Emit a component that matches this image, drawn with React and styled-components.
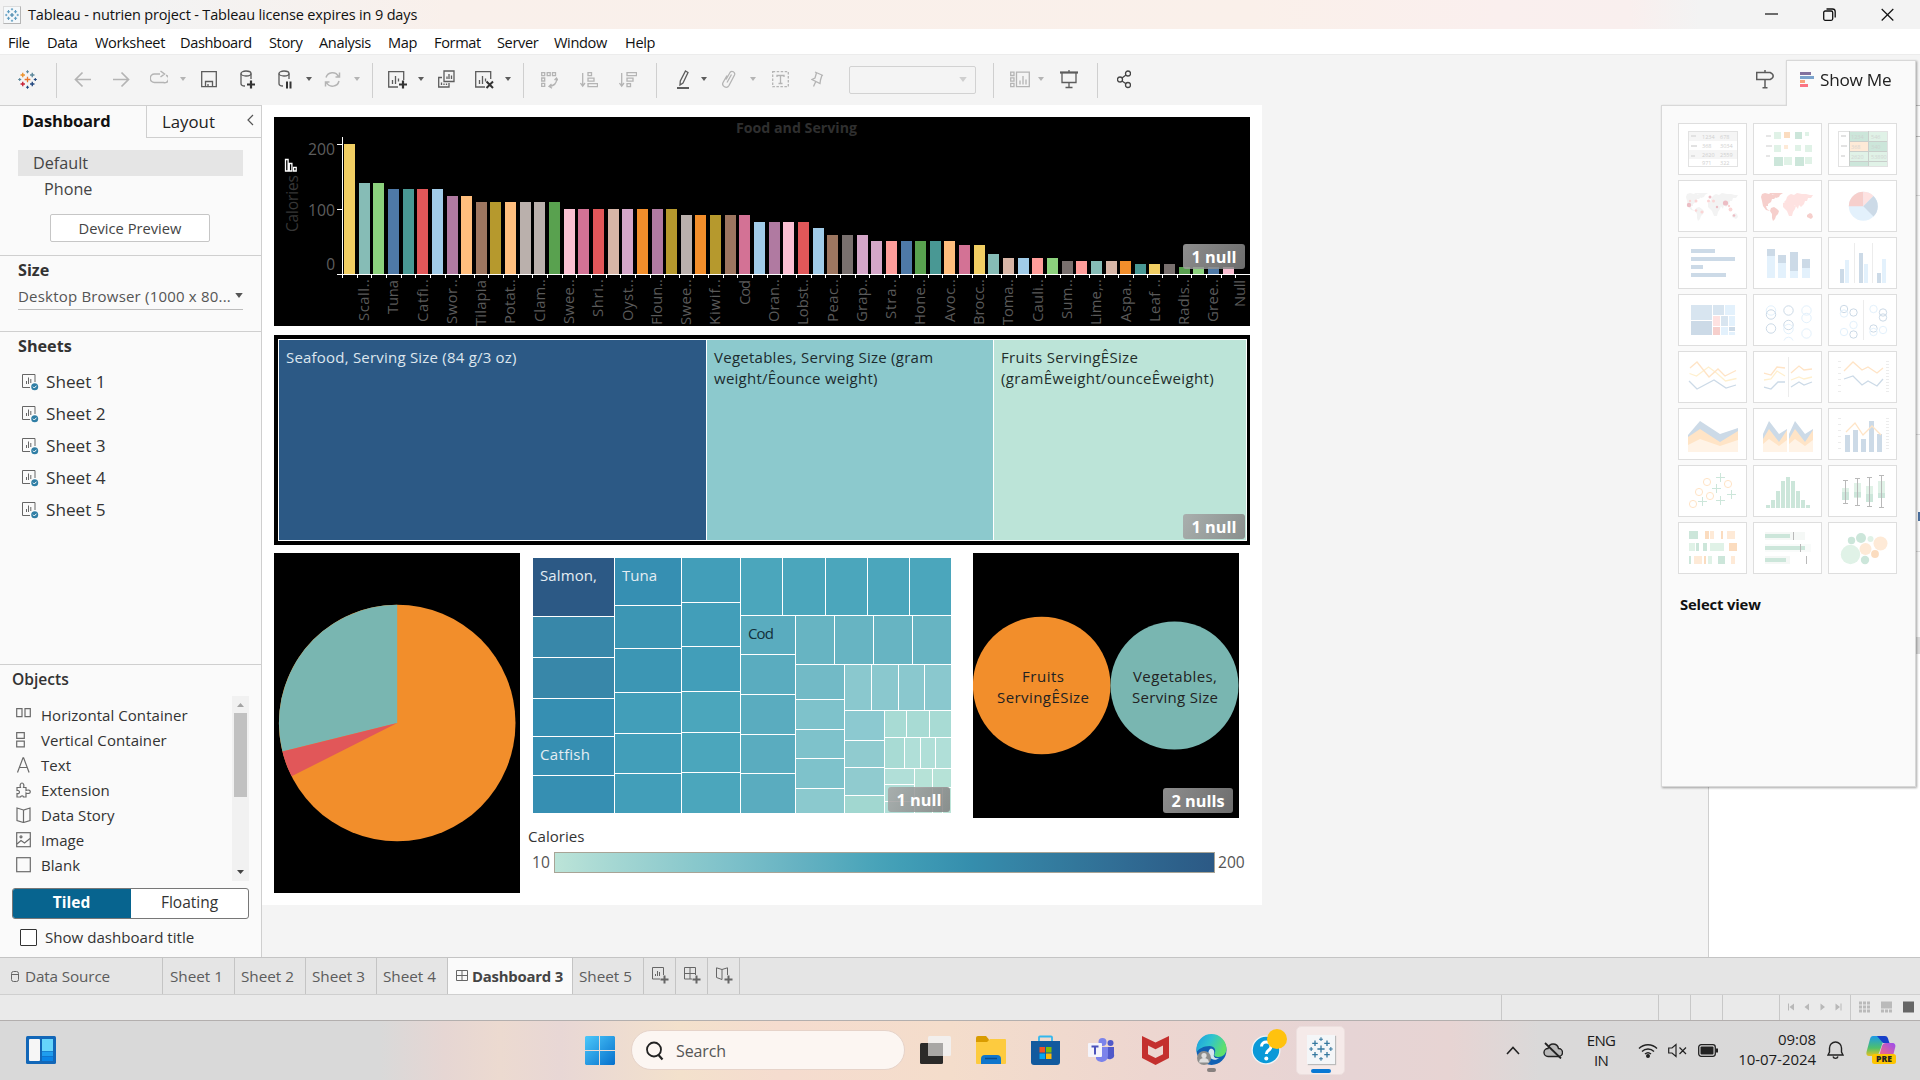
import React from "react";
import styled, { createGlobalStyle, css } from "styled-components";

const UI = `"Open Sans", "Noto Sans", sans-serif`;

const GlobalStyle = createGlobalStyle`
  *, *::before, *::after { box-sizing: border-box; }
  body { margin: 0; overflow: hidden; font-family: ${UI}; color: #333; }
  svg { display: block; flex: none; }
  svg text { font-family: ${UI}; }
`;

const Screen = styled.div`
  width: 1920px;
  height: 1080px;
  display: flex;
  flex-direction: column;
  background: #f4f4f4;
  white-space: nowrap;
`;

/* ---------- title and menu ---------- */

const TitleBar = styled.header`
  height: 29px;
  display: flex;
  align-items: center;
  padding-left: 3px;
  background: linear-gradient(90deg, #f3f3f3 0, #f3f3f3 150px, #f9f0eb 450px, #faf0ea 1250px, #faefee 1500px, #f9efee 1630px, #f3f3f3 1700px);
`;
const AppBadge = styled.span`
  width: 18px;
  height: 18px;
  display: flex;
  align-items: center;
  justify-content: center;
  background: #f5f8fa;
  border: 1px solid #dcdcdc;
  border-right-color: #b5b5b5;
  border-bottom-color: #b5b5b5;
`;
const WindowTitle = styled.span`
  flex: 1;
  margin-left: 7px;
  font-size: 14.5px;
  letter-spacing: -0.16px;
  color: #111;
`;
const WindowButtons = styled.div`
  display: flex;
  align-items: center;
  gap: 45px;
  padding: 0 26px 1px 0;
`;
const MenuBar = styled.nav`
  height: 25px;
  display: flex;
  align-items: center;
  gap: 16px;
  padding: 1px 0 0 8px;
  background: #fff;
`;
const MenuItem = styled.span`
  width: ${(p) => p.$w}px;
  font-size: 14.6px;
  line-height: 20px;
  letter-spacing: -0.38px;
  color: #111;
`;

/* ---------- toolbar ---------- */

const ToolBar = styled.div`
  height: 51px;
  display: flex;
  align-items: center;
  padding-bottom: 2px;
  border-top: 1px solid #ececec;
`;
const Tool = styled.span`
  margin-left: ${(p) => p.$gap}px;
  color: ${(p) => (p.$off ? "#b4b4b4" : "#5c5c5c")};
`;
const Divider = styled.span`
  width: 1px;
  height: 35px;
  margin: 2px 0 0 ${(p) => p.$gap}px;
  background: #cfcfcf;
`;
const FitSelect = styled.span`
  width: 127px;
  height: 28px;
  margin: 1px 0 0 25px;
  padding-right: 8px;
  display: flex;
  align-items: center;
  justify-content: flex-end;
  border: 1px solid #d2d2d2;
  border-radius: 2px;
  color: #cfcfcf;
`;

/* ---------- body ---------- */

const Body = styled.div`
  height: 852px;
  display: flex;
`;
const SidePanel = styled.aside`
  width: 262px;
  display: flex;
  flex-direction: column;
  background: #fafafa;
  border-top: 1px solid #cfcfcf;
  border-right: 1px solid #cfcfcf;
`;
const PanelTabs = styled.div`
  height: 32px;
  display: flex;
`;
const ActiveTab = styled.span`
  width: 146px;
  padding-left: 22px;
  line-height: 29px;
  font-size: 16.5px;
  font-weight: 700;
  letter-spacing: -0.15px;
  color: #111;
`;
const OtherTab = styled.span`
  flex: 1;
  display: flex;
  align-items: center;
  justify-content: space-between;
  padding: 0 7px 1px 15px;
  font-size: 16.8px;
  border-left: 1px solid #cfcfcf;
  border-bottom: 1px solid #cfcfcf;
  color: #222;
`;
const Collapse = styled.span`
  padding-bottom: 3px;
`;
const DeviceBlock = styled.div`
  height: 118px;
  padding: 12px 18px 0;
  display: flex;
  flex-direction: column;
  font-size: 16.2px;
  color: #444;
  border-bottom: 1px solid #cfcfcf;
`;
const DeviceRow = styled.span`
  height: 26px;
  line-height: 26px;
  padding-left: ${(p) => p.$indent}px;
  background: ${(p) => (p.$on ? "#e5e5e5" : "none")};
`;
const PreviewButton = styled.span`
  width: 160px;
  height: 28px;
  margin: 12px 0 0 32px;
  line-height: 27px;
  text-align: center;
  font-size: 14.7px;
  background: #fff;
  border: 1px solid #c6c6c6;
  border-radius: 2px;
`;
const SizeBlock = styled.div`
  height: 76px;
  padding: 2px 18px 0;
  border-bottom: 1px solid #cfcfcf;
`;
const Heading = styled.div`
  line-height: 24px;
  font-size: 16.2px;
  font-weight: 700;
  color: #333;
`;
const SizeSelect = styled.div`
  height: 28px;
  display: flex;
  align-items: center;
  justify-content: space-between;
  font-size: 15px;
  letter-spacing: 0.2px;
  color: #555;
  border-bottom: 1px solid #bdbdbd;
`;
const SheetsBlock = styled.div`
  flex: 1;
  padding: 2px 18px 0;
`;
const SheetRow = styled.div`
  height: 32px;
  display: flex;
  align-items: center;
  gap: 7px;
  padding-left: 4px;
  font-size: 17.2px;
  color: #333;
`;
const SheetMark = styled.span`
  padding-top: 2px;
`;
const SheetList = styled.div`
  margin-top: 7px;
`;
const ObjectsBlock = styled.div`
  height: 293px;
  padding: 3px 12px 0;
  border-top: 1px solid #cfcfcf;
`;
const ObjectsHeading = styled.div`
  height: 28px;
  line-height: 23px;
  font-size: 15.6px;
  font-weight: 600;
`;
const ObjectsScroll = styled.div`
  height: 185px;
  display: flex;
  justify-content: space-between;
`;
const ObjectsList = styled.div`
  padding-top: 6px;
`;
const ObjectRow = styled.div`
  height: 25px;
  display: flex;
  align-items: center;
  gap: 9px;
  padding-left: 4px;
  font-size: 15px;
  letter-spacing: 0.06px;
  color: #333;
`;
const ScrollTrack = styled.div`
  width: 17px;
  display: flex;
  flex-direction: column;
  align-items: center;
  justify-content: space-between;
  padding: 7px 0;
  background: #f1f1f1;
`;
const ScrollThumb = styled.div`
  width: 13px;
  height: 84px;
  margin: 6px 0 auto;
  background: #c1c1c1;
`;
const Segmented = styled.div`
  width: 237px;
  height: 31px;
  margin-top: 7px;
  display: flex;
  border: 1px solid #777;
  border-radius: 3px;
  overflow: hidden;
  background: #fff;
`;
const Segment = styled.span`
  flex: 1;
  line-height: 27px;
  text-align: center;
  font-size: 15.5px;
  ${(p) =>
    p.$on &&
    css`
      flex: 0 0 119px;
      margin: -1px 0 -1px -1px;
      line-height: 29px;
      color: #fff;
      font-weight: 700;
      background: #07648f;
    `}
`;
const CheckRow = styled.div`
  display: flex;
  align-items: center;
  gap: 8px;
  margin: 8px 0 0 8px;
  font-size: 15.1px;
  line-height: 20px;
`;
const CheckBox = styled.span`
  width: 17px;
  height: 17px;
  margin-top: 1px;
  border: 1px solid #333;
  border-radius: 1px;
  background: #fff;
`;

/* ---------- dashboard ---------- */

const Workspace = styled.main`
  flex: 1;
  display: flex;
  justify-content: space-between;
`;
const Dashboard = styled.section`
  width: 1000px;
  height: 800px;
  padding: 12px;
  display: flex;
  flex-direction: column;
  background: #fff;
`;
const Sheet = styled.div`
  position: relative;
  flex: none;
  width: ${(p) => p.$w}px;
  height: ${(p) => p.$h}px;
  background: ${(p) => (p.$plain ? "#fff" : "#000")};
  margin: ${(p) => p.$m || 0};
`;
const NullBadge = styled.span`
  position: absolute;
  right: ${(p) => p.$r}px;
  bottom: ${(p) => p.$b}px;
  width: ${(p) => p.$w || 62}px;
  height: 25px;
  line-height: 26px;
  text-align: center;
  font-size: 16.3px;
  font-weight: 700;
  color: #fff;
  border-radius: 3px;
  background: linear-gradient(120deg, rgba(166, 166, 166, 0.85), rgba(128, 128, 128, 0.85));
`;
const Blocks = styled.div`
  height: 202px;
  display: grid;
  grid-template-columns: 427px 286px 1fr;
  gap: 1px;
  padding: 1px;
  background: #fff;
`;
const BlocksSheet = styled(Sheet)`
  padding: 4px 3px 4px 4px;
`;
const Block = styled.div`
  padding: 7px 7px;
  font-size: 15px;
  line-height: 21px;
  letter-spacing: ${(p) => p.$ls}px;
  color: ${(p) => p.$c};
  background: ${(p) => p.$bg};
`;
const LowerRow = styled.div`
  display: flex;
`;
const LowerRight = styled.div`
  flex: 1;
  display: flex;
  flex-direction: column;
`;
const ChartPair = styled.div`
  display: flex;
`;
const Legend = styled.div`
  margin-top: 7px;
  padding-left: 8px;
  color: #333;
  font-size: 15.1px;
`;
const LegendTitle = styled.div`
  height: 22px;
  line-height: 22px;
`;
const LegendScale = styled.div`
  height: 21px;
  display: flex;
  align-items: center;
  margin: 5px 0 0 4px;
  font-size: 15.6px;
  line-height: 20px;
  color: #555;
`;
const Ramp = styled.span`
  width: 661px;
  height: 21px;
  margin: 0 3px 0 4px;
  border: 1px solid #a8a496;
  background: linear-gradient(90deg, ${(p) => p.$stops});
`;
const LegendValue = styled.span`
  width: ${(p) => p.$w}px;
  padding-bottom: 1px;
`;
const RightPane = styled.div`
  width: 212px;
  display: flex;
  flex-direction: column;
  align-items: flex-end;
  background: #fff;
  border-left: 1px solid #cfcfcf;
`;
const EdgePiece = styled.span`
  width: ${(p) => p.$w || 4}px;
  height: ${(p) => p.$h}px;
  background: ${(p) => p.$c || "#fafafa"};
`;

/* ---------- show me ---------- */

const ShowMe = styled.section`
  position: absolute;
  left: 1661px;
  top: 60px;
  width: 255px;
  height: 727px;
  display: flex;
  flex-direction: column;
  filter: drop-shadow(1px 1px 1px rgba(0, 0, 0, 0.35));
`;
const ShowMeTab = styled.div`
  width: 130px;
  height: 46px;
  margin: 0 0 -1px auto;
  z-index: 1;
  display: flex;
  align-items: center;
  gap: 6px;
  padding: 0 0 8px 13px;
  font-size: 17.2px;
  letter-spacing: -0.25px;
  color: #222;
  background: #fafafa;
  border: 1px solid #d8d8d8;
  border-bottom: 0;
`;
const ShowMeBody = styled.div`
  flex: 1;
  padding: 17px 16px;
  background: #fafafa;
  border: 1px solid #d8d8d8;
`;
const CardGrid = styled.div`
  display: grid;
  grid-template-columns: repeat(3, 69px);
  grid-auto-rows: 52px;
  gap: 5px 6px;
`;
const Card = styled.span`
  background: #fff;
  box-shadow: inset 0 0 0 1px #dedede;
`;
const SelectView = styled.div`
  margin: 18px 0 0 2px;
  line-height: 24px;
  font-size: 14.8px;
  font-weight: 700;
  letter-spacing: -0.15px;
  color: #111;
`;

/* ---------- tab strip and status ---------- */

const SheetTabs = styled.div`
  height: 37px;
  display: flex;
  background: #e5e5e5;
  border-top: 1px solid #c4c4c4;
`;
const SheetTab = styled.span`
  width: ${(p) => p.$w}px;
  display: flex;
  align-items: center;
  gap: 6px;
  padding: ${(p) => p.$pad || "0 0 0 6px"};
  font-size: 15.3px;
  letter-spacing: ${(p) => p.$ls || -0.02}px;
  color: #5c5c5c;
  border-right: 1px solid #c4c4c4;
  ${(p) =>
    p.$on &&
    css`
      font-weight: 700;
      font-size: 14.9px;
      color: #444;
      background: #fafafa;
      gap: 4px;
      letter-spacing: -0.22px;
    `}
`;
const StatusBar = styled.div`
  height: 27px;
  display: flex;
  justify-content: flex-end;
  background: #eaeaea;
  border-top: 1px solid #cfcfcf;
  border-bottom: 1px solid #b3afae;
`;
const StatusCell = styled.span`
  width: ${(p) => p.$w}px;
  display: flex;
  align-items: center;
  padding-bottom: 2px;
  border-left: 1px solid #c8c8c8;
`;

/* ---------- taskbar ---------- */

const TaskBar = styled.footer`
  height: 59px;
  display: flex;
  align-items: center;
  padding-bottom: 1px;
  background: linear-gradient(90deg, #d9d9d9 0, #d9d9d9 380px, #e6d6d3 445px, #ecdad0 500px, #e8d7d5 560px, #f3e1cc 680px, #f5dccf 780px, #f4ddcb 950px, #edd6d0 1150px, #e6d4d5 1350px, #e7d4d3 1450px, #dad9d9 1540px, #d9d9d9);
`;
const SearchBox = styled.span`
  width: 274px;
  height: 40px;
  margin: 0 0 0 16px;
  display: flex;
  align-items: center;
  gap: 12px;
  padding: 1px 0 0 13px;
  border-radius: 20px;
  font-size: 16px;
  letter-spacing: -0.1px;
  color: #555;
  background: #fcf6f2;
  border: 1px solid #e6d3c9;
`;
const TaskIcon = styled.span`
  margin-left: ${(p) => p.$gap}px;
`;
const ActiveTask = styled.span`
  width: 49px;
  height: 49px;
  margin-left: 9px;
  display: flex;
  flex-direction: column;
  align-items: center;
  justify-content: flex-end;
  gap: 5px;
  padding-bottom: 1px;
  border-radius: 5px;
  background: #f5eae9;
  border: 1px solid #ecdfde;
`;
const TaskTile = styled.span`
  width: 28px;
  height: 29px;
  display: flex;
  align-items: center;
  justify-content: center;
  background: #f4f6f8;
  box-shadow: 1px 1px 1px #bbb;
`;
const TaskUnderline = styled.span`
  width: 20px;
  height: 4px;
  border-radius: 2px;
  background: #0a78d4;
`;
const TrayText = styled.span`
  margin-left: ${(p) => p.$gap}px;
  padding-bottom: ${(p) => p.$lift || 0}px;
  width: ${(p) => p.$w}px;
  text-align: ${(p) => p.$align};
  font-size: 15px;
  line-height: 20px;
  letter-spacing: ${(p) => p.$ls}px;
  color: #1c1c1c;
`;

/* ---------- icons ---------- */

const Plus = ({ x, y, r, c, w = 1 }) => (
  <path d={`M${x - r} ${y}h${2 * r}M${x} ${y - r}v${2 * r}`} stroke={c} strokeWidth={w} fill="none" />
);
const TableauMark = ({ size, colors, w = 1.3 }) => {
  const [a, b, c, d, e] = colors;
  return (
    <svg width={size} height={size} viewBox="0 0 20 20">
      <Plus x={10} y={10} r={3} c={a} w={w} />
      <Plus x={5} y={5.3} r={2.3} c={b} w={w} />
      <Plus x={15} y={5.3} r={2.3} c={c} w={w} />
      <Plus x={5} y={14.7} r={2.3} c={d} w={w} />
      <Plus x={15} y={14.7} r={2.3} c={e} w={w} />
      <Plus x={10} y={1.8} r={1.6} c={c} w={w * 0.8} />
      <Plus x={10} y={18.2} r={1.6} c={e} w={w * 0.8} />
      <Plus x={1.8} y={10} r={1.6} c={c} w={w * 0.8} />
      <Plus x={18.2} y={10} r={1.6} c={e} w={w * 0.8} />
    </svg>
  );
};

const Glyph = ({ w, h = 21, sw = 1.3, children }) => (
  <svg width={w} height={h} viewBox={`0 0 ${w} ${h}`} fill="none" stroke="currentColor" strokeWidth={sw}>
    {children}
  </svg>
);
const Caret = ({ w = 6, h = 4 }) => (
  <svg width={w} height={h} viewBox="0 0 6 4">
    <path d="M0 0h6L3 4z" fill="currentColor" />
  </svg>
);

const toolIcons = {
  back: [17, <path d="M17 10.5H1.5M8.5 3.5l-7 7 7 7" strokeWidth="1.7" />],
  forward: [17, <path d="M0 10.5h15.500M8.500 3.500l7 7-7 7" strokeWidth="1.7" />],
  redo: [18, <path d="M10 5H4.500a3.700 3.700 0 0 0 0 8.500h9a3.700 3.700 0 0 0 2.500-7.300M10.500 2l4 3-4 3" strokeWidth="1.500" />],
  save: [16, <path d="M.7 2.700h14.600v15H.700zM4.500 17.500v-5h7v5M7 17.500v-2.500" />],
  dbAdd: [15, <g><ellipse cx="6" cy="4.500" rx="5" ry="2.500" /><path d="M1 4.500v10c0 1.500 2 2.500 4 2.500M11 4.500V10" /><path d="M11 11.500v8M7 15.500h8" strokeWidth="2.200" stroke="#333" /></g>],
  dbPause: [14, <g><ellipse cx="6" cy="4.500" rx="5" ry="2.500" /><path d="M1 4.500v10c0 1.500 2 2.500 4 2.500M11 4.500V10" /><path d="M9 12.500v7M12.500 12.500v7" strokeWidth="2" stroke="#333" /></g>],
  refresh: [17, <path d="M2 8.500A6.700 6.700 0 0 1 14.500 7.500M15 12A6.700 6.700 0 0 1 2.500 13.500M15.500 3.500v4.500h-4M1.500 17.500V13h4" strokeWidth="1.500" />],
  newSheet: [19, <g><path d="M10 18H.7V2.700h15V11M4.500 15v-4M7.500 15V7M10.500 12.500V9.500" /><path d="M15 11.500v8M11 15.500h8" stroke="#333" strokeWidth="2.200" /></g>],
  duplicate: [17, <path d="M6 2h10v10.500H6zM4 8.500H.7v9.500H11v-4M9 10V7.500M11 10V5M13.500 10V6.500M3.500 16v-2.500M6 16v-1.500M8.500 16v-1.500" />],
  clear: [19, <g><path d="M10 18H.7V2.700h15V10M4.500 15v-4M7.500 15V7M10.500 12.500V9.500" /><path d="M11.500 12.500l6.500 6.500M18 12.500l-6.500 6.500" stroke="#333" strokeWidth="2" /></g>],
  swap: [17, <path d="M.7 3.700h3v3h-3zM6.200 3.700h3v3h-3zM11.500 3.700h3v3h-3zM.7 9h3v3h-3zM.7 14.300h3v3h-3zM15.500 9.500c.5 4-2 7-7 8M13.500 11l2-2 1.500 2.500M10.500 15l-2.500 2.300 3 2" />],
  asc: [18, <path d="M2.700 4v13M.5 14l2.200 3.200L5 14M8 3.700h3.500v3H8zM8 9.200h6v3H8zM8 14.700h9.500v3H8z" />],
  desc: [18, <path d="M2.700 4v13M.5 14l2.200 3.200L5 14M8 3.700h9.500v3H8zM8 9.200h6v3H8zM8 14.700h3.500v3H8z" />],
  pen: [12, <g><path d="M8.500 2l2.500 1.500-5 10.500-3 2 .3-4z" /><path d="M0 19h12" strokeWidth="2" /></g>],
  clip: [14, <path d="M4 10.500l4-7a2.600 2.600 0 0 1 4.500 2.500L7 16.500a3.300 3.300 0 0 1-5.800-3.300L5 6.500M9.500 5.500L5 13.500" />],
  text: [17, <g><rect x=".7" y="2.700" width="15.600" height="15" strokeDasharray="2.500 1.500" /><path d="M5 8V6.500h7V8M8.500 6.500v8M6.500 14.500h4" /></g>],
  pin: [13, <path d="M4 3l8 3.500M5.500 3.800L4 9 1 10.500l8 4L9.500 11 11 6M4.800 12.500L2.500 17.500" />],
  fit: [20, <path d="M.7 3.200h3.300v3.300H.7zM.7 8.800h3.300v3.300H.7zM.7 14.400h3.300v3.300H.7zM6.500 3.200h12.800v14.500H6.500zM10 15.500v-4M13 15.500V7M16 15.500v-5" />],
  present: [18, <g><path d="M0 3.500h18" strokeWidth="2.200" /><path d="M2 4v9.500h14V4M9 13.500V19M5.500 18.500h7M9 1v2" /></g>],
  share: [14, <g stroke="#444"><circle cx="3" cy="10.500" r="2.500" /><circle cx="11" cy="4.500" r="2.500" /><circle cx="11" cy="16" r="2.500" /><path d="M5 9l4-3M5 12l4 2.700" /></g>],
  guide: [18, <path d="M9 1v2.500M.7 3.500h13.500c2 1 3 2.500 3 3.500s-1 2.500-3 3.500H.7zM9 11v8M6.500 18.700h5" strokeWidth="1.500" />],
};
const tools = [
  ["back", 17, 1], ["forward", 22, 1], ["redo", 20, 1], ["caret", 12, 1], ["save", 15], ["dbAdd", 23],
  ["dbPause", 23], ["caret", 14], ["refresh", 12, 1], ["caret", 13, 1], ["sep", 12], ["newSheet", 15],
  ["caret", 11], ["duplicate", 14], ["clear", 20], ["caret", 11], ["sep", 12], ["swap", 17, 1],
  ["asc", 22, 1], ["desc", 21, 1], ["sep", 19], ["pen", 20], ["caret", 12], ["clip", 15, 1],
  ["caret", 14, 1], ["text", 16, 1], ["pin", 22, 1], ["select", 25], ["sep", 17], ["fit", 16, 1],
  ["caret", 8, 1], ["present", 16], ["sep", 19], ["share", 19], ["guide", 625],
];

const ToolItem = ({ kind, gap, off }) => {
  if (kind === "sep") return <Divider $gap={gap} />;
  if (kind === "select") return <FitSelect><Caret w={8} h={5} /></FitSelect>;
  if (kind === "caret") return <Tool $gap={gap} $off={off}><Caret /></Tool>;
  const [w, shape] = toolIcons[kind];
  return <Tool $gap={gap} $off={off}><Glyph w={w}>{shape}</Glyph></Tool>;
};

const SheetIcon = () => (
  <svg width="17" height="17" viewBox="0 0 17 17" fill="none" stroke="#666">
    <path d="M8 13.500H.500V.500h12.500V8M4.500 10V7M6.500 10V3.500M8.800 9V5" />
    <circle cx="12.700" cy="12.700" r="3.500" fill="#2f7ea5" stroke="none" />
    <path d="M11 12.700l1.300 1.300 2.200-2.300" stroke="#fff" />
  </svg>
);

const objectIcons = [
  ["Horizontal Container", <path d="M.7 1.700h5.300v8H.7zM9 1.700h5.300v8H9z" />],
  ["Vertical Container", <path d="M.7 .7h7.600v5.600H.7zM.7 9.200h7.600v5.600H.7z" />],
  ["Text", <path d="M1.500 15.500L7 .8h.600l5.500 14.700M3.500 10.500h7.600" />],
  ["Extension", <path d="M1 5.500h3.500c-1-2 0-4.500 1.500-4.500s2.500 2.500 1.500 4.500H10v3c2-1 4.300-.5 4.300 1.200s-2.300 2.300-4.300 1.300v4H7.500c.3-1.500-3-1.500-3 0H1v-3.500c3 1 3.500-3.500 0-3z" />],
  ["Data Story", <path d="M7.500 3L1 1v12.500l6.500 2 6.500-2V1zM7.500 3v12.500" />],
  ["Image", <g><rect x=".7" y=".7" width="13.600" height="14" /><path d="M1 12l4-3.500 3.500 2.500L14 6.500" /><circle cx="5" cy="4.800" r="1" /></g>],
  ["Blank", <rect x=".7" y=".7" width="13.600" height="14" />],
];

/* ---------- chart data ---------- */

const PALETTE = {
  Y: "#f1ce63", T: "#86bcb6", G: "#8cd17d", B: "#4e79a7", D: "#499894", R: "#e15759", L: "#a0cbe8", P: "#b07aa1",
  O: "#ffbe7d", N: "#9d7660", M: "#b6992d", A: "#bab0ac", E: "#59a14f", K: "#fabfd2", H: "#d37295", S: "#d7b5a6",
  V: "#d4a6c8", F: "#f28e2b", Z: "#79706e", C: "#ff9d9a",
};
const BAR_COLORS = "YTGBDRLPONMOAAEKHRSVFPMAFMNHLPKRLNZVVCBEDOHYTSLCGZCTSFDYZEGBK";
const BAR_HEIGHTS = [
  130, 91, 91, 85, 85, 85, 85, 78, 78, 72, 72, 72, 72, 72, 72, 65, 65, 65, 65, 65, 65, 65, 65, 59, 59, 59, 59, 59,
  52, 52, 52, 52, 46, 39, 39, 39, 33, 33, 33, 33, 33, 33, 29, 29, 20, 16, 16, 16, 16, 13, 13, 13, 13, 13, 10, 10,
  10, 7, 7, 7, 7,
];
const BAR_LABELS = [
  ["Scall..", 42], ["Tuna", 34], ["Catfi..", 43], ["Swor..", 45], ["Tilapia", 46], ["Potat..", 45], ["Clam..", 43],
  ["Swee..", 45], ["Shri..", 38], ["Oyst..", 42], ["Floun..", 46], ["Swee..", 46], ["Kiwif..", 46], ["Cod", 25],
  ["Oran..", 43], ["Lobst..", 46], ["Peac..", 43], ["Grap..", 43], ["Stra..", 40], ["Hone..", 46], ["Avoc..", 43],
  ["Brocc..", 46], ["Toma..", 46], ["Cauli..", 43], ["Sum..", 40], ["Lime,..", 46], ["Aspa..", 43], ["Leaf ..", 43],
  ["Radis..", 46], ["Gree..", 43], ["Null", 27],
];
const STEP = 14.645;
const labelX = (i) => Math.min(68 + (2 * i + 1.5) * STEP + 5, 970.5);

const BarChart = () => (
  <svg width="976" height="209" viewBox="0 0 976 209">
    <text x="462" y="16" fontSize="14" fontWeight="700" fill="#2f2f2f" textLength="121" lengthAdjust="spacingAndGlyphs">Food and Serving</text>
    <g fontSize="15.500" fill="#5e5e5e" textAnchor="end">
      <text x="61" y="37.500" textLength="27" lengthAdjust="spacingAndGlyphs">200</text>
      <text x="61" y="98.500" textLength="27" lengthAdjust="spacingAndGlyphs">100</text>
      <text x="61" y="153">0</text>
    </g>
    <text transform="translate(23.500 115) rotate(-90)" fontSize="15.500" fill="#363636" textLength="57">Calories</text>
    <path d="M11.500 54V42.500h2.600V54zM15.300 54v-7.500h2.600V54zM19.600 54v-3.700h2.600V54z" fill="none" stroke="#fff" strokeWidth="1.300" />
    {BAR_HEIGHTS.map((h, i) => (
      <rect key={i} x={Math.round(70 + i * STEP)} y={157 - h} width="11" height={h} fill={PALETTE[BAR_COLORS[i]]} />
    ))}
    <g fill="#fff">
      <rect x="68" y="20" width="1" height="141" />
      <rect x="63" y="157" width="913" height="1" />
      <rect x="63" y="27" width="5" height="1" />
      <rect x="63" y="92" width="5" height="1" />
      {Array.from({ length: 62 }, (_, i) => (
        <rect key={i} x={Math.round(68 + i * STEP)} y="158" width="1" height="3" />
      ))}
    </g>
    <g fontSize="14.800" fill="#5a5a5a">
      {BAR_LABELS.map(([label, len], i) => (
        <text key={i} transform={`translate(${labelX(i)} ${(label.includes("..") ? 162 : 163) + len}) rotate(-90)`} textLength={len}>
          {label}
        </text>
      ))}
    </g>
  </svg>
);

const Pie = () => (
  <svg width="246" height="340" viewBox="0 0 246 340">
    <circle cx="123.200" cy="170" r="118.300" fill="#f28e2b" />
    <path d="M123.200 170V51.700A118.300 118.300 0 0 0 8.400 198.400z" fill="#79b6b1" />
    <path d="M123.200 170L8.400 198.400A118.300 118.300 0 0 0 17.600 223.300z" fill="#e15759" />
  </svg>
);

const column = (x0, x1, ys, colors) => colors.map((c, i) => [x0, ys[i], x1, ys[i + 1], c]);
const strip = (y0, y1, xs, colors) => colors.map((c, i) => [xs[i], y0, xs[i + 1], y1, c]);
const fill = (n, c) => Array(n).fill(c);
const TREE = [
  ...column(-1, 81, [-1, 58, 99, 140, 178, 217, 255], ["#2c5985", "#3887a9", "#3887a9", "#368fb2", "#368fb2", "#368fb2"]),
  ...column(81, 148, [-1, 47, 90, 134, 175, 215, 255], ["#368fb2", "#3c96b4", "#3c96b4", "#429eb9", "#429eb9", "#429eb9"]),
  ...column(148, 207, [-1, 44, 88, 133, 174, 214, 255], ["#429eb9", "#429eb9", "#429eb9", "#4ba6bc", "#4ba6bc", "#4ba6bc"]),
  ...strip(-1, 57, [207, 249, 292, 334, 376, 418], fill(5, "#4ba6bc")),
  ...column(207, 262, [57, 96, 136, 176, 215, 255], fill(5, "#5aacbf")),
  ...strip(57, 106, [262, 301, 340, 379, 418], fill(4, "#67b4c2")),
  ...column(262, 311, [106, 141, 171, 200, 230, 255], ["#72bac6", "#7ec2cb", "#7ec2cb", "#7ec2cb", "#8bc9ce"]),
  ...strip(106, 152, [311, 338, 365, 391, 418], fill(4, "#8ac8ce")),
  ...column(311, 351, [152, 182, 209, 237, 255], ["#8cc9d0", "#90cbcf", "#90cbcf", "#a1d7d0"]),
  ...strip(152, 179, [351, 373, 396, 418], fill(3, "#a8dbd4")),
  ...strip(179, 210, [351, 371, 387, 402, 418], ["#a8dbd4", "#b0dfd8", "#b0dfd8", "#b0dfd8"]),
  ...column(351, 381, [210, 226, 243, 255], fill(3, "#b1dfd8")),
  ...strip(210, 229, [381, 399, 418], fill(2, "#b6e2d7")),
  ...strip(229, 255, [381, 399, 409, 418], fill(3, "#bce4d8")),
];
const TreeMap = () => (
  <svg width="418" height="255" viewBox="0 0 418 255" fontSize="15">
    {TREE.map(([x0, y0, x1, y1, c], i) => (
      <rect key={i} x={x0 + 1} y={y0 + 1} width={x1 - x0 - 1} height={y1 - y0 - 1} fill={c} />
    ))}
    <text x="7" y="23" fill="#e4edf3" textLength="57">Salmon,</text>
    <text x="89" y="23" fill="#e4edf3" textLength="35">Tuna</text>
    <text x="7" y="202" fill="#e4edf3" textLength="50">Catfish</text>
    <text x="215" y="81" fill="#12303a" textLength="26">Cod</text>
  </svg>
);

const Bubbles = () => (
  <svg width="266" height="265" viewBox="0 0 266 265" fontSize="15" fill="#222">
    <circle cx="68.700" cy="132.500" r="68.800" fill="#f28e2b" />
    <circle cx="201.500" cy="132.500" r="64" fill="#79b6b1" />
    <text x="49" y="129" textLength="42">Fruits</text>
    <text x="24" y="150" textLength="92">ServingÊSize</text>
    <text x="160" y="129" textLength="84">Vegetables,</text>
    <text x="159" y="150" textLength="86">Serving Size</text>
  </svg>
);

const RAMP =
  "#bce4d8,#aedcd5,#a1d5d2,#95cecf,#89c8cc,#7ec1ca,#72bac6,#66b2c2,#59acbe,#4ba5ba,#419eb6,#3b96b2,#358ead,#3586a7,#347ea1,#32779b,#316f96,#2f6790,#2d608a,#2c5985";

/* ---------- show me thumbnails ---------- */

const bars = (list, c) => list.map(([x, y, w, h, k], i) => <rect key={i} x={x} y={y} width={w} height={h} fill={k || c} />);
const rings = (list, r) => list.map(([x, y, c], i) => <circle key={i} cx={x} cy={y} r={r} fill="none" stroke={c} strokeWidth="1" />);
const line = (d, c) => <path d={d} fill="none" stroke={c} strokeWidth="1.300" />;
const b1 = "#ccdae7", b2 = "#e3f1fc", g1 = "#cce6da", g2 = "#e0f2e7", o1 = "#fbdcbf", o2 = "#feead7", o3 = "#ffe4c6", gr = "#ececec";
const WEST = "M9 14l3-1 4 1 2-1 1 2 3 0 1 2-2 2-2 0-1 3-3 2 0 2-2 0 1 3 3 2-4-1-3-4-1-5-1-4zM16 14l3-1 4 0 2 0 5 0-3 2-1 2-3 1-1-3z";
const SOUTH = "M18 28l3-1 3 2 2 2-1 3-2 2-1 3-2 2-1-3 0-4-2-3z";
const EAST = "M33 20l1-3 2-2 2-1 3 1 3-2 5 1 4 0 4 1 3 0-2 3-3 0-1 3-2 0-1 3-3 3-2-2-1 4-3-4-3 0-2-3-3 1-3-1z";
const AFRICA = "M30 23l3-1 5 0 3 3 2 1-1 3-2 3-1 4-3 0-2-5-4-4z";
const AUS = "M54 35l3-2 2 1 1 3-2 2-4-2z";
const Cell = ({ x, y, children }) => <text x={x} y={y} fontSize="5.500" fill="#cfcfcf" stroke="none">{children}</text>;

const thumbs = [
  <g>
    <rect x="10.500" y="8.500" width="49" height="35" fill="#fff" stroke="#e2e2e2" />
    {bars([[11, 9, 48, 9], [11, 27, 48, 9]], "#f5f5f5")}
    {bars([[13, 12, 5, 2], [13, 22, 6, 2], [13, 32, 4, 2]], "#e2e2e2")}
    <Cell x="24" y="15.500">1234</Cell><Cell x="42" y="15.500">678</Cell><Cell x="24" y="24.500">368</Cell><Cell x="42" y="24.500">3034</Cell>
    <Cell x="24" y="33.500">2620</Cell><Cell x="42" y="33.500">2559</Cell><Cell x="24" y="41.500">971</Cell><Cell x="42" y="41.500">322</Cell>
  </g>,
  <g>
    {bars([[13, 12, 5, 2], [13, 22, 6, 2], [13, 32, 4, 2]], "#e6e6e6")}
    {bars([[21, 9, 7, 7, g2], [31, 9, 6, 6, o1], [42, 9, 7, 7, g1], [52, 9, 4, 4, g2], [21, 22, 7, 7, g2], [31, 22, 4, 4, o2], [42, 22, 6, 6, g2], [52, 22, 7, 7, g2], [21, 34, 9, 9, g1], [31, 34, 8, 8, g2], [42, 34, 9, 9, g1], [52, 34, 7, 7, g2]])}
  </g>,
  <g>
    {bars([[22, 9, 18, 9, g1], [41, 9, 18, 9, g2], [22, 19, 18, 9, o2], [41, 19, 18, 9, g1], [22, 29, 18, 9, g2], [41, 29, 18, 9, g2], [22, 39, 18, 4, g1], [41, 39, 18, 4, g2]])}
    {bars([[13, 12, 5, 2], [13, 22, 6, 2], [13, 32, 4, 2]], "#e2e2e2")}
    <rect x="10.500" y="8.500" width="49" height="35" fill="none" stroke="#e2e2e2" />
    <path d="M21.500 8v35M40.500 8v35M21 18.500h38M21 28.500h38M21 38.500h38" stroke="#c9cecb" />
    <g opacity=".8"><Cell x="23" y="15.500">1234</Cell><Cell x="43" y="15.500">546</Cell><Cell x="23" y="25.500">368</Cell><Cell x="43" y="25.500">340</Cell><Cell x="23" y="35.500">2620</Cell><Cell x="43" y="35.500">53890</Cell></g>
  </g>,
  <g>
    <path d={WEST + SOUTH + EAST + AFRICA + AUS} fill="#f3f3f3" />
    {[[11, 25, 2.200], [12, 21, 1.200], [18, 21, 1.500], [32, 17, 1.500], [35.500, 21, 1.500], [30.500, 21, 1.500], [47.500, 23, 2.600], [51, 26, 1.200], [52.500, 29.500, 1.900], [39, 27, 1.200], [18, 30.500, 1.300], [24, 32, 1.600], [56, 35.500, 1.300]].map(([x, y, r], i) => (
      <circle key={i} cx={x} cy={y} r={r} fill={i % 3 ? "#fbd5d5" : "#ecbdc4"} />
    ))}
  </g>,
  <g><path d={WEST + SOUTH + AUS} fill="#f6cfcc" /><path d={EAST + AFRICA} fill="#fee2e1" /></g>,
  <g>
    <circle cx="35.300" cy="26.300" r="14.500" fill={b2} />
    <path d="M35.300 26.300V11.800A14.500 14.500 0 0 0 20.800 26.300z" fill="#f6cfcc" />
    <path d="M35.300 26.300V11.800A14.500 14.500 0 0 1 45.500 16z" fill="#fee2e1" />
    <path d="M35.300 26.300L45.500 16A14.500 14.500 0 0 1 45.500 36.600z" fill={b1} />
  </g>,
  <g>{bars([[13, 12, 24, 4], [13, 20, 44, 4], [13, 28, 12, 4], [13, 36, 35, 4]], b1)}</g>,
  <g>{bars([[14, 12, 8, 29, b2], [14, 12, 8, 7, b1], [25, 18, 8, 23, b2], [25, 18, 8, 8, b1], [37, 15, 8, 26, b2], [37, 15, 8, 19, b1], [49, 22, 8, 19, b2], [49, 22, 8, 9, b1]])}</g>,
  <g>{bars([[12, 32, 4, 14, b1], [17, 23, 4, 23, b2], [31, 16, 4, 30, b1], [36, 27, 4, 19, b2], [49, 36, 4, 10, b1], [54, 22, 4, 24, b2], [26, 6, 1, 40, gr], [44, 6, 1, 40, gr]])}</g>,
  <g>{bars([[13, 11, 21, 15, "#d8e5f0"], [13, 27, 21, 14, b1], [35, 11, 11, 10, "#d8e5f0"], [47, 11, 10, 10, b2], [35, 22, 7, 10, "#fee2e1"], [43, 22, 7, 10, "#d8e5f0"], [51, 22, 6, 10, b2], [35, 33, 7, 8, "#f6cfcc"], [43, 33, 7, 8, b2], [51, 33, 6, 4, b1], [51, 38, 6, 3, b2]])}</g>,
  <g>{rings([[18, 16.500, b2], [18, 20.500, b1], [18, 34.500, b1], [35.500, 16.500, b1], [35.500, 31, b1], [35.500, 35, b2], [53.500, 16.500, b2], [53.500, 24, b2], [53.500, 39.500, b2]], 4.700)}<path d="M31 46.500a4.700 4.700 0 0 1 9 0" fill="none" stroke={b2} /></g>,
  <g>{rings([[16, 15, b1], [16, 19.500, b2], [25.500, 18.500, b1], [25.500, 31, b2], [16, 38, b2], [25.500, 40.500, b1], [45.500, 15, b2], [55, 18.500, b1], [55, 23.500, b1], [45.500, 34.500, b1], [45.500, 38, b2], [55, 36, b2]], 3.700)}{bars([[35, 6, 1, 40]], gr)}</g>,
  <g>{line("M11.500 22.500l7 2.500 12-9 8 6 9 8 11-2.500", "#fff0cf")}{line("M12 17l7-6 12 15 9-8 7 7 11-5.500", o3)}{line("M11 30l8 8 17-9 12 8 10-3", b1)}</g>,
  <g>{line("M11 22l7 2 6-8 8 1M38 22l8-7 5 4 8-1", o3)}{line("M11 29l7-1 6-8 8 5M38 29l8-3 5 2 8-2", "#fff0cf")}{line("M11 36l7 2 7-7h7M38 36l8-5 5 3 8-3", b1)}{bars([[35, 6, 1, 40]], gr)}</g>,
  <g>{line("M16 20l9-9 9 8 6-3 9 6 6-5", o3)}{line("M16 28l9-3 9 9 6-4 9 5 6-7", b1)}<path d="M10 10.500h3M10 16.500h3M10 22.500h3M10 28.500h3M10 34.500h3M10 40.500h3M58 10.500h3M58 13.500h3M58 16.500h3M58 19.500h3M58 22.500h3M58 25.500h3M58 28.500h3M58 31.500h3M58 34.500h3M58 37.500h3M58 40.500h3" stroke={gr} /></g>,
  <g><path d="M10 27l12-14 20 13 18-6v24H10z" fill={b1} /><path d="M10 29l12-8 20 13 18-11v21H10z" fill={o3} /><path d="M10 37l12-6 20 7 18-6v12H10z" fill="#fff3e6" /></g>,
  <g>{[10, 36].map((x) => <g key={x} transform={`translate(${x} 0)`}><path d="M0 26l6-13 10 13 8-5v23H0z" fill={b1} /><path d="M0 31l6-10 10 13 8-12v22H0z" fill={o3} /><path d="M0 36l6-5 10 7 8-6v12H0z" fill="#fff3e6" /></g>)}</g>,
  <g>{bars([[17, 27, 5, 17], [25, 22, 5, 22], [33, 31, 5, 13], [41, 13, 5, 31], [49, 26, 5, 18]], b1)}{line("M18 24l9-9 8 12 9-9 9 9", o3)}<path d="M10 10.500h3M10 16.500h3M10 22.500h3M10 28.500h3M10 34.500h3M10 40.500h3M58 10.500h3M58 13.500h3M58 16.500h3M58 19.500h3M58 22.500h3M58 25.500h3M58 28.500h3M58 31.500h3M58 34.500h3M58 37.500h3M58 40.500h3" stroke={gr} /></g>,
  <g>{rings([[29, 17, o3], [50, 19, o3], [21, 27, o3], [32, 31, o3], [15, 39, o3]], 3.600)}{[[42.500, 12.500], [38.500, 23.500], [53.500, 29.500], [24.500, 36.500], [42.500, 35.500]].map(([x, y]) => <Plus key={x + "-" + y} x={x} y={y} r={4.500} c={g1} />)}</g>,
  <g>{bars([[13, 40, 4, 3], [18, 35, 4, 8], [23, 26, 4, 17], [28, 16, 4, 27], [33, 12, 4, 31], [38, 16, 4, 27], [43, 26, 4, 17], [48, 35, 4, 8], [53, 40, 4, 3]], g1)}</g>,
  <g>{[[17, 23, 12, 15, 38], [29, 18, 15, 13, 40], [41, 21, 16, 12, 41], [53, 16, 17, 10, 42]].map(([x, y, h, t, e], i) => <g key={i}><rect x={x - 3} y={y} width="7" height={h} fill={g2} /><rect x={x - 3} y={[27, 27, 29, 28][i]} width="7" height={[8, 5, 8, 5][i]} fill={g1} /><path d={`M${x + 0.500} ${t}V${e}M${x - 2} ${t}.500h5M${x - 2} ${e}.500h5`} stroke="#b9b9b9" /></g>)}</g>,
  <g>{bars([[11, 9, 9, 8, g1], [27, 9, 4, 8, o1], [32, 9, 4, 8, o2], [43, 9, 2, 8, o1], [49, 9, 8, 8, o2], [11, 21, 6, 8, g2], [18, 21, 3, 8, g1], [25, 21, 4, 8, g1], [32, 21, 14, 8, g2], [51, 21, 8, 8, o1], [11, 34, 2, 8, g1], [16, 34, 8, 8, o2], [26, 34, 2, 8, o1], [30, 34, 4, 8, g2], [40, 34, 7, 8, g1], [53, 34, 4, 8, o2]])}</g>,
  <g>{bars([[12, 10, 40, 8, "#f5f8f6"], [12, 22, 46, 8, "#f9fbfa"], [12, 34, 25, 8, "#f5f8f6"], [12, 12, 25, 4, g1], [12, 24, 40, 4, g1], [12, 36, 21, 4, g1], [40, 10, 1, 8, "#b9b9b9"], [47, 22, 1, 8, "#b9b9b9"], [53, 34, 1, 8, "#b9b9b9"]])}</g>,
  <g>{[[22.500, 32.500, 9.700, g2], [23.500, 18.500, 3.700, g1], [33, 16, 5, g1], [42.500, 17, 3, g2], [52.500, 21.500, 7, o2], [37.500, 27, 6, o2], [47, 32, 3.900, o1], [37, 38, 4.200, g1]].map(([x, y, r, c]) => <circle key={x} cx={x} cy={y} r={r} fill={c} />)}</g>,
];

const AddSheet = ({ children }) => (
  <svg width="17" height="18" viewBox="0 0 17 18" fill="none" stroke="#666">
    {children}
    <path d="M12.500 8.500v8M8.500 12.500h8" strokeWidth="2" />
  </svg>
);

export default function App() {
  return (
    <Screen>
      <GlobalStyle />
      <TitleBar>
        <AppBadge><TableauMark size={14} w={1.600} colors={["#3d7fa6", "#5d9cc0", "#5d9cc0", "#5d9cc0", "#5d9cc0"]} /></AppBadge>
        <WindowTitle>Tableau - nutrien project - Tableau license expires in 9 days</WindowTitle>
        <WindowButtons>
          <svg width="13" height="13"><path d="M0 6h13" stroke="#111" strokeWidth="1.200" /></svg>
          <svg width="13" height="13" viewBox="0 0 13 13" fill="none" stroke="#111" strokeWidth="1.300"><rect x=".7" y="3" width="9" height="9.300" rx="1.500" /><path d="M3.500 1H9.500a2.700 2.700 0 0 1 2.700 2.700V9.500" /></svg>
          <svg width="13" height="13"><path d="M.7 1l11.600 11.500M12.300 1L.7 12.500" stroke="#111" strokeWidth="1.200" /></svg>
        </WindowButtons>
      </TitleBar>
      <MenuBar>
        {[["File", 23], ["Data", 32], ["Worksheet", 69], ["Dashboard", 73], ["Story", 34], ["Analysis", 53], ["Map", 30], ["Format", 47], ["Server", 41], ["Window", 55], ["Help", 32]].map(([t, w]) => (
          <MenuItem key={t} $w={w}>{t}</MenuItem>
        ))}
      </MenuBar>
      <ToolBar>
        <Tool $gap={18}><TableauMark size={19} w={1.400} colors={["#e8762c", "#eb9129", "#5b879b", "#c72035", "#1f457e"]} /></Tool>
        <Divider $gap={19} />
        {tools.map(([kind, gap, off], i) => <ToolItem key={i} kind={kind} gap={gap} off={off} />)}
      </ToolBar>

      <Body>
        <SidePanel>
          <PanelTabs>
            <ActiveTab>Dashboard</ActiveTab>
            <OtherTab>
              Layout
              <Collapse>
                <svg width="7" height="12" viewBox="0 0 7 12"><path d="M6 1L1 6l5 5" fill="none" stroke="#555" strokeWidth="1.200" /></svg>
              </Collapse>
            </OtherTab>
          </PanelTabs>
          <DeviceBlock>
            <DeviceRow $on $indent={15}>Default</DeviceRow>
            <DeviceRow $indent={26}>Phone</DeviceRow>
            <PreviewButton>Device Preview</PreviewButton>
          </DeviceBlock>
          <SizeBlock>
            <Heading>Size</Heading>
            <SizeSelect>Desktop Browser (1000 x 80... <Caret w={8} h={5} /></SizeSelect>
          </SizeBlock>
          <SheetsBlock>
            <Heading>Sheets</Heading>
            <SheetList>
              {[1, 2, 3, 4, 5].map((n) => <SheetRow key={n}><SheetMark><SheetIcon /></SheetMark>Sheet {n}</SheetRow>)}
            </SheetList>
          </SheetsBlock>
          <ObjectsBlock>
            <ObjectsHeading>Objects</ObjectsHeading>
            <ObjectsScroll>
              <ObjectsList>
                {objectIcons.map(([label, shape]) => (
                  <ObjectRow key={label}>
                    <svg width="16" height="16" viewBox="0 0 16 16" fill="none" stroke="#6b6b6b" strokeWidth="1.200">{shape}</svg>
                    {label}
                  </ObjectRow>
                ))}
              </ObjectsList>
              <ScrollTrack>
                <svg width="7" height="4"><path d="M0 4h7L3.500 0z" fill="#a3a3a3" /></svg>
                <ScrollThumb />
                <svg width="7" height="4"><path d="M0 0h7L3.500 4z" fill="#444" /></svg>
              </ScrollTrack>
            </ObjectsScroll>
            <Segmented>
              <Segment $on>Tiled</Segment>
              <Segment>Floating</Segment>
            </Segmented>
            <CheckRow><CheckBox />Show dashboard title</CheckRow>
          </ObjectsBlock>
        </SidePanel>

        <Workspace>
          <Dashboard>
            <Sheet $w={976} $h={209} $m="0 0 9px">
              <BarChart />
              <NullBadge $r={5} $b={57}>1 null</NullBadge>
            </Sheet>
            <BlocksSheet $w={976} $h={210} $m="0 0 8px">
              <Blocks>
                <Block $ls={0.21} $bg="#2c5985" $c="#dde6ee">Seafood, Serving Size (84 g/3 oz)</Block>
                <Block $ls={0.26} $bg="#8cc9cd" $c="#1c2b2e">Vegetables, Serving Size (gram<br />weight/Êounce weight)</Block>
                <Block $ls={0.36} $bg="#bce4d8" $c="#222e2b">Fruits ServingÊSize<br />(gramÊweight/ounceÊweight)</Block>
              </Blocks>
              <NullBadge $r={5} $b={6}>1 null</NullBadge>
            </BlocksSheet>
            <LowerRow>
              <Sheet $w={246} $h={340}><Pie /></Sheet>
              <LowerRight>
                <ChartPair>
                  <Sheet $plain $w={418} $h={255} $m="5px 22px 5px 13px">
                    <TreeMap />
                    <NullBadge $r={1} $b={1}>1 null</NullBadge>
                  </Sheet>
                  <Sheet $w={266} $h={265}>
                    <Bubbles />
                    <NullBadge $w={70} $r={6} $b={5}>2 nulls</NullBadge>
                  </Sheet>
                </ChartPair>
                <Legend>
                  <LegendTitle>Calories</LegendTitle>
                  <LegendScale>
                    <LegendValue $w={18}>10</LegendValue>
                    <Ramp $stops={RAMP} />
                    <LegendValue $w={28}>200</LegendValue>
                  </LegendScale>
                </Legend>
              </LowerRight>
            </LowerRow>
          </Dashboard>
          <RightPane>
            <EdgePiece $h={1} $c="#bdbdbd" />
            <EdgePiece $h={30} />
            <EdgePiece $h={1} $c="#bdbdbd" />
            <EdgePiece $h={58} />
            <EdgePiece $h={1} $c="#dadada" />
            <EdgePiece $h={238} />
            <EdgePiece $h={1} $c="#dadada" />
            <EdgePiece $h={77} />
            <EdgePiece $w={2} $h={9} $c="#4a6f9e" />
            <EdgePiece $h={30} />
            <EdgePiece $h={1} $c="#dadada" />
            <EdgePiece $h={85} />
            <EdgePiece $h={17} $c="#dadada" />
          </RightPane>
        </Workspace>
      </Body>

      <SheetTabs>
        <SheetTab $w={163} $pad="0 0 0 11px" $ls={-0.15}>
          <svg width="8" height="11" viewBox="0 0 8 11" fill="none" stroke="#666"><rect x=".5" y=".5" width="7" height="10" rx="2" /><path d="M.5 3.500h7" /></svg>
          Data Source
        </SheetTab>
        <SheetTab $w={72} $pad="0 0 0 7px">Sheet 1</SheetTab>
        <SheetTab $w={71}>Sheet 2</SheetTab>
        <SheetTab $w={71}>Sheet 3</SheetTab>
        <SheetTab $w={71}>Sheet 4</SheetTab>
        <SheetTab $on $w={125} $pad="0 0 1px 8px">
          <svg width="12" height="11" viewBox="0 0 12 11" fill="none" stroke="#666"><path d="M.5 .5h11v10H.5zM6 .5v10M.5 5.500h11" /></svg>
          Dashboard 3
        </SheetTab>
        <SheetTab $w={71} $pad="0 0 0 6px">Sheet 5</SheetTab>
        <SheetTab $w={32} $pad="0 0 0 8px"><AddSheet><path d="M8 12H.5V.5h11V8M3.500 9V7M5.500 9V4M7.500 9V5" /></AddSheet></SheetTab>
        <SheetTab $w={32} $pad="0 0 0 8px"><AddSheet><path d="M8 12H.5V.5h11V8M6 .5V12M.5 6.500h11" /></AddSheet></SheetTab>
        <SheetTab $w={32} $pad="0 0 0 8px"><AddSheet><path d="M6 2.500L.5.800v9.700L6 12.500M6 2.500v10M6 2.500L11.500.800V8" /></AddSheet></SheetTab>
      </SheetTabs>
      <StatusBar>
        <StatusCell $w={157} /><StatusCell $w={32} /><StatusCell $w={32} /><StatusCell $w={57} />
        <StatusCell $w={71}>
          <svg width="70" height="8" viewBox="0 0 70 8" fill="#b8b8b8"><path d="M8 .5h1v7H8zM14 .5v7L9.500 4zM29 .5v7L24.500 4zM40.500 .5v7L45 4zM55.500 .5v7L60 4zM60.500 .5h1v7h-1z" /></svg>
        </StatusCell>
        <StatusCell $w={70}>
          <svg width="69" height="12" viewBox="0 0 69 12" fill="#bababa">
            {[8, 12, 16].map((x) => [0.500, 4.500, 8.500].map((y) => <rect key={x + "-" + y} x={x} y={y} width="3" height="3" />))}
            <rect x="30" y=".5" width="11" height="7" /><rect x="30" y="8.500" width="3" height="3" /><rect x="34" y="8.500" width="3" height="3" /><rect x="38" y="8.500" width="3" height="3" />
            <rect x="52" y=".5" width="11" height="11" fill="#666" />
          </svg>
        </StatusCell>
      </StatusBar>

      <TaskBar>
        <TaskIcon $gap={26}>
          <svg width="30" height="28" viewBox="0 0 30 28"><rect width="30" height="28" rx="1.500" fill="#1267b8" /><rect x="3" y="3" width="11" height="22" rx="1" fill="#f6f6f6" /><rect x="16" y="3" width="11" height="12" fill="#66d5fb" /><rect x="16" y="15.500" width="11" height="4.500" fill="#1f9dee" /><rect x="16" y="20.500" width="11" height="4.500" fill="#0a84e6" /></svg>
        </TaskIcon>
        <TaskIcon $gap={529}>
          <svg width="30" height="29" viewBox="0 0 30 29"><defs><linearGradient id="win" x1="0" y1="0" x2="1" y2="1"><stop offset="0" stopColor="#4cc8fa" /><stop offset="1" stopColor="#0670cc" /></linearGradient></defs><path d="M1 0h13v14H0V1zM15 0h14l1 1v13H15zM0 15h14v14H1l-1-1zM15 15h15v13l-1 1H15z" fill="url(#win)" /></svg>
        </TaskIcon>
        <SearchBox>
          <svg width="19" height="20" viewBox="0 0 19 20" fill="none" stroke="#222"><circle cx="9" cy="8.500" r="7" strokeWidth="1.800" /><path d="M13.500 14l4 4.500" strokeWidth="2.200" /></svg>
          Search
        </SearchBox>
        <TaskIcon $gap={15}>
          <svg width="31" height="30" viewBox="0 0 31 30"><rect x="0" y="8" width="23" height="21" rx="1.500" fill="#2b2a29" /><rect x="8" y="1" width="23" height="20" rx="1.500" fill="#f2efed" /><rect x="8" y="8" width="15" height="13" fill="#a9a7a5" /></svg>
        </TaskIcon>
        <TaskIcon $gap={25}>
          <svg width="30" height="28" viewBox="0 0 30 28"><path d="M0 2a2 2 0 0 1 2-2h8l3 3.500V8H0z" fill="#d99b00" /><path d="M0 6h11l3-3h15a1 1 0 0 1 1 1v23a1 1 0 0 1-1 1H1a1 1 0 0 1-1-1z" fill="#fdcb3f" /><path d="M5 28v-5a4 4 0 0 1 4-4h12a4 4 0 0 1 4 4v5z" fill="#0f76cc" /><path d="M9 22.500h12" stroke="#0a4c8c" strokeWidth="1.500" /></svg>
        </TaskIcon>
        <TaskIcon $gap={25}>
          <svg width="29" height="30" viewBox="0 0 29 30"><path d="M8 7V2.500a1 1 0 0 1 1-1h11a1 1 0 0 1 1 1V7" fill="none" stroke="#33b7ee" strokeWidth="1.800" /><path d="M0 6h29v21a3 3 0 0 1-3 3H3a3 3 0 0 1-3-3z" fill="#125a9e" /><path d="M8.500 12h5.500v5.500H8.500z" fill="#f35325" /><path d="M15 12h5.500v5.500H15z" fill="#81bc06" /><path d="M8.500 18.500h5.500V24H8.500z" fill="#05a6f0" /><path d="M15 18.500h5.500V24H15z" fill="#ffba08" /></svg>
        </TaskIcon>
        <TaskIcon $gap={28}>
          <svg width="27" height="26" viewBox="0 0 27 26"><circle cx="14.500" cy="5" r="4" fill="#7b83eb" /><circle cx="22.500" cy="6" r="3" fill="#5059c9" /><path d="M18 10h8v7a4 4 0 0 1-8 2z" fill="#5059c9" /><path d="M8 10h12v9a6.500 6.500 0 0 1-12 3z" fill="#7b83eb" /><rect x="0" y="6" width="14" height="14" rx="1" fill="#f4f4fb" /><path d="M3.500 9.500h7M7 9.500v8" stroke="#4b53bc" strokeWidth="2" /></svg>
        </TaskIcon>
        <TaskIcon $gap={27}>
          <svg width="27" height="30" viewBox="0 0 27 30"><path d="M0 1l13.500 6.500L27 1v22l-13.500 7L0 23zM6 10.500v8.700l7.500 3.800 7.500-3.800v-8.700l-7.500 3.700z" fill="#c4302e" fillRule="evenodd" /></svg>
        </TaskIcon>
        <TaskIcon $gap={27}>
          <svg width="31" height="44" viewBox="0 0 31 44">
            <defs><linearGradient id="edge" x1="0" y1="0" x2="1" y2=".4"><stop offset="0" stopColor="#1b9de2" /><stop offset=".5" stopColor="#2fc3cf" /><stop offset="1" stopColor="#5fe06b" /></linearGradient></defs>
            <circle cx="15.500" cy="22" r="15" fill="#1161b4" />
            <path d="M.5 21A15 15 0 0 1 30.500 21c0 5-4 8-8 8-3 0-5-1-4-3 2-4 0-8-5-8-6 0-11 3-13 6z" fill="url(#edge)" />
            <path d="M14 21c3-1 5 2 4 5s1 5 5 4c-3 3-8 2-10-2-1-3-1-5 1-7z" fill="#ecf3f5" opacity=".9" />
            <circle cx="8" cy="30" r="7" fill="#8d8d8b" /><circle cx="8" cy="27.500" r="2.600" fill="#dedede" /><path d="M3 34.500a5 4.500 0 0 1 10 0z" fill="#dedede" />
            <rect x="11" y="40" width="9" height="4" rx="2" fill="#87807f" />
          </svg>
        </TaskIcon>
        <TaskIcon $gap={24}>
          <svg width="36" height="44" viewBox="0 0 36 44"><circle cx="15" cy="22" r="14.500" fill="#f0f4f6" /><circle cx="15" cy="22" r="13.200" fill="#0a99d8" /><path d="M10.500 18.500c0-6 9.500-6 9.500 0 0 4-4.700 3.500-4.700 7.500" fill="none" stroke="#fff" strokeWidth="3" /><circle cx="15.300" cy="30.500" r="2" fill="#fff" /><circle cx="26" cy="11" r="10" fill="#ffc20e" /></svg>
        </TaskIcon>
        <ActiveTask>
          <TaskTile><TableauMark size={24} w={1.100} colors={fill(5, "#35789f")} /></TaskTile>
          <TaskUnderline />
        </ActiveTask>
        <TaskIcon $gap={161}><svg width="14" height="9" viewBox="0 0 14 9"><path d="M1 8l6-6.500L13 8" fill="none" stroke="#222" strokeWidth="1.600" /></svg></TaskIcon>
        <TaskIcon $gap={23}>
          <svg width="20" height="17" viewBox="0 0 20 17" fill="none" stroke="#222" strokeWidth="1.400"><path d="M5 14.500a4 4 0 0 1 0-8C6 3 8 2 10 2c3 0 5 2 5.500 4.500a4 4 0 0 1 0 8z" fill="#b9b9b9" /><path d="M2 1l16 15.500" strokeWidth="1.800" /></svg>
        </TaskIcon>
        <TrayText $gap={20} $w={36} $ls={-0.7} $align="center">ENG<br />IN</TrayText>
        <TaskIcon $gap={19}>
          <svg width="20" height="16" viewBox="0 0 20 16" fill="none" stroke="#222" strokeWidth="1.400"><path d="M1 6.500a12.700 12.700 0 0 1 18 0M4 9.500a8.500 8.500 0 0 1 12 0M7 12a4.500 4.500 0 0 1 6 0" /><circle cx="10" cy="14" r="1.300" fill="#222" /></svg>
        </TaskIcon>
        <TaskIcon $gap={10}>
          <svg width="19" height="15" viewBox="0 0 19 15" fill="none" stroke="#222" strokeWidth="1.200"><path d="M.7 5v5H4l4 3.500v-12L4 5zM11.500 4.500l6.500 6.500M18 4.500L11.500 11" /></svg>
        </TaskIcon>
        <TaskIcon $gap={11}>
          <svg width="20" height="13" viewBox="0 0 20 13"><rect x=".7" y=".7" width="16.600" height="11.600" rx="2.500" fill="none" stroke="#222" strokeWidth="1.300" /><rect x="2.500" y="2.500" width="13" height="8" rx="1" fill="#222" /><path d="M18 4.500h2v4h-2z" fill="#222" /></svg>
        </TaskIcon>
        <TrayText $gap={18} $w={80} $ls={-0.05} $lift={2} $align="right">09:08<br />10-07-2024</TrayText>
        <TaskIcon $gap={11}>
          <svg width="17" height="19" viewBox="0 0 17 19" fill="none" stroke="#222" strokeWidth="1.400"><path d="M1 14l1.500-3V7a6 6 0 0 1 12 0v4l1.500 3zM6 15.500a2.600 2.600 0 0 0 5 0" /></svg>
        </TaskIcon>
        <TaskIcon $gap={22}>
          <svg width="30" height="30" viewBox="0 0 30 30">
            <defs>
              <linearGradient id="cpA" x1="0" y1="0" x2="0" y2="1"><stop offset="0" stopColor="#1b9ae8" /><stop offset=".6" stopColor="#4fc06b" /><stop offset="1" stopColor="#e8c21f" /></linearGradient>
              <linearGradient id="cpB" x1="1" y1="0" x2="0" y2="1"><stop offset="0" stopColor="#9a4cf0" /><stop offset="1" stopColor="#fb6f7c" /></linearGradient>
            </defs>
            <path d="M7 1h12l-6 17c-1 2-2 3-4 3H3c-2 0-3-1.500-2.500-4L4 4c.5-2 1.500-3 3-3z" fill="url(#cpA)" />
            <path d="M11 1h8c3 0 3 3 4.500 7H17z" fill="#1740c9" />
            <path d="M20 8h6c3 0 4 2 3 5l-2 8H13l3-10c.5-2 2-3 4-3z" fill="url(#cpB)" />
            <rect x="6" y="19" width="24" height="10" rx="2.500" fill="#fdc500" />
            <text x="18" y="27.300" textAnchor="middle" fontSize="8.500" fontWeight="800" fill="#222" textLength="16">PRE</text>
          </svg>
        </TaskIcon>
      </TaskBar>

      <ShowMe>
        <ShowMeTab>
          <svg width="14" height="15" viewBox="0 0 14 15"><rect width="11" height="3" fill="#83729e" /><rect y="4" width="14" height="3" fill="#7ba3cc" /><rect y="8" width="5" height="3" fill="#f7a37b" /><rect y="12" width="8" height="3" fill="#fb7383" /></svg>
          Show Me
        </ShowMeTab>
        <ShowMeBody>
          <CardGrid>
            {thumbs.map((t, i) => <Card key={i}><svg width="69" height="52" viewBox="0 0 69 52">{t}</svg></Card>)}
          </CardGrid>
          <SelectView>Select view</SelectView>
        </ShowMeBody>
      </ShowMe>
    </Screen>
  );
}
